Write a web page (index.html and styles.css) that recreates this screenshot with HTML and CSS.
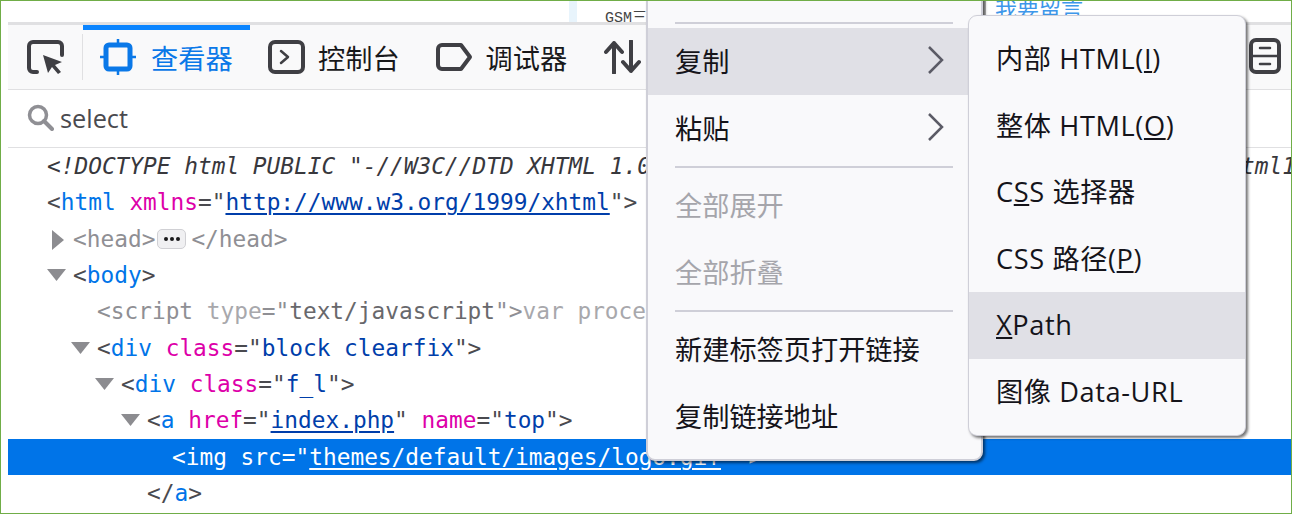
FILE: index.html
```html
<!DOCTYPE html>
<html lang="zh-CN">
<head>
<meta charset="utf-8">
<title>Inspector</title>
<link rel="stylesheet" href="styles.css">
</head>
<body>
<div class="frame">
  <div class="page-strip">
    <div class="strip-column"></div>
    <div class="strip-gsm">GSM三</div>
    <div class="strip-bar"></div>
    <a class="strip-link">我要留言</a>
  </div>
  <div class="devtools">
    <div class="toolbar">
      <div class="tool-pick">
        <svg class="icon" width="37" height="34" viewBox="0 0 37 34"><path d="M10 32H6a4 4 0 0 1-4-4V6a4 4 0 0 1 4-4h25a4 4 0 0 1 4 4v9" class="stroke"/><path d="M16 15l19 7-7 3 6 7-3 2-6-7-4 6z" class="fill"/></svg>
      </div>
      <div class="tool-sep"></div>
      <div class="tab tab-active">
        <svg width="36" height="36" viewBox="0 0 36 36"><rect x="6" y="6" width="24" height="24" rx="3" class="stroke-blue"/><path d="M18 0v6M18 30v6M0 18h6M30 18h6" class="tick-blue"/></svg>
        <span>查看器</span>
      </div>
      <div class="tab">
        <svg width="37" height="34" viewBox="0 0 37 34"><rect x="2" y="2" width="33" height="30" rx="5" class="stroke"/><path d="M13 11l7 6-7 6" class="stroke-thin"/></svg>
        <span>控制台</span>
      </div>
      <div class="tab">
        <svg width="37" height="30" viewBox="0 0 37 30"><path d="M6 3h19l9 12-9 12H6a4 4 0 0 1-4-4V7a4 4 0 0 1 4-4z" class="stroke"/></svg>
        <span>调试器</span>
      </div>
      <div class="tab tab-net">
        <svg width="37" height="34" viewBox="0 0 37 34"><path d="M10 33V3M2 12l8-9 8 9M27 1v30M19 22l8 9 8-9" class="stroke"/></svg>
      </div>
      <svg class="tool-end" width="32" height="36" viewBox="0 0 32 36"><rect x="2" y="2" width="28" height="32" rx="5" class="stroke"/><path d="M2 18h28" class="stroke-thin"/><path d="M11 10h10M11 26h10" class="stroke-thin"/></svg>
    </div>
    <div class="search">
      <svg width="27" height="27" viewBox="0 0 27 27"><circle cx="11" cy="11" r="8.5" class="search-ring"/><path d="M17 17l8 8" class="search-handle"/></svg>
      <span>select</span>
    </div>
    <div class="tree">
      <div class="row lv0 doctype">&lt;!DOCTYPE html PUBLIC "-//W3C//DTD XHTML 1.0 Transitional//EN" "http://www.w3.org/TR/xhtml1/DTD/xhtml1-transitional.dtd"&gt;</div>
      <div class="row lv0"><span class="p">&lt;</span><span class="t">html</span> <span class="a">xmlns</span><span class="p">=</span><span class="p">"</span><span class="v link">http://www.w3.org/1999/xhtml</span><span class="p">"&gt;</span></div>
      <div class="row lv1 dim"><svg class="twisty" width="13" height="20" viewBox="0 0 13 20"><path d="M1 0l12 10L1 20z"/></svg><span class="p">&lt;</span><span class="t">head</span><span class="p">&gt;</span><span class="badge"><i></i><i></i><i></i></span><span class="p">&lt;/</span><span class="t">head</span><span class="p">&gt;</span></div>
      <div class="row lv1"><svg class="twisty" width="19" height="12" viewBox="0 0 19 12"><path d="M0 0h19L9.500 12z"/></svg><span class="p">&lt;</span><span class="t">body</span><span class="p">&gt;</span></div>
      <div class="row lv2 dim"><span class="p">&lt;</span><span class="t">script</span> <span class="a">type</span><span class="p">="</span><span class="v">text/javascript</span><span class="p">"&gt;</span><span class="faint">var process = process</span></div>
      <div class="row lv2"><svg class="twisty" width="19" height="12" viewBox="0 0 19 12"><path d="M0 0h19L9.500 12z"/></svg><span class="p">&lt;</span><span class="t">div</span> <span class="a">class</span><span class="p">="</span><span class="v">block clearfix</span><span class="p">"&gt;</span></div>
      <div class="row lv3"><svg class="twisty" width="19" height="12" viewBox="0 0 19 12"><path d="M0 0h19L9.500 12z"/></svg><span class="p">&lt;</span><span class="t">div</span> <span class="a">class</span><span class="p">="</span><span class="v">f_l</span><span class="p">"&gt;</span></div>
      <div class="row lv4"><svg class="twisty" width="19" height="12" viewBox="0 0 19 12"><path d="M0 0h19L9.500 12z"/></svg><span class="p">&lt;</span><span class="t">a</span> <span class="a">href</span><span class="p">="</span><span class="v link">index.php</span><span class="p">"</span> <span class="a">name</span><span class="p">="</span><span class="v">top</span><span class="p">"&gt;</span></div>
      <div class="row lv5 selected">&lt;img src="<span class="link">themes/default/images/logo.gif</span>" &gt;</div>
      <div class="row lv4"><span class="p">&lt;/</span><span class="t">a</span><span class="p">&gt;</span></div>
    </div>
  </div>

  <div class="menu menu-main">
    <div class="menu-sep"></div>
    <div class="item active"><span>复制</span><svg width="16" height="28" viewBox="0 0 16 28"><path d="M1 1l13 13L1 27" class="chev"/></svg></div>
    <div class="item"><span>粘贴</span><svg width="16" height="28" viewBox="0 0 16 28"><path d="M1 1l13 13L1 27" class="chev"/></svg></div>
    <div class="menu-sep"></div>
    <div class="item disabled">全部展开</div>
    <div class="item disabled">全部折叠</div>
    <div class="menu-sep"></div>
    <div class="item">新建标签页打开链接</div>
    <div class="item">复制链接地址</div>
  </div>

  <div class="menu menu-sub">
    <div class="item">内部 HTML(<u>I</u>)</div>
    <div class="item">整体 HTML(<u>O</u>)</div>
    <div class="item">C<u>S</u>S 选择器</div>
    <div class="item">CSS 路径(<u>P</u>)</div>
    <div class="item active"><span><u>X</u>Path</span></div>
    <div class="item">图像 Data-URL</div>
  </div>
</div>
</body>
</html>
```
FILE: styles.css
```css
* { box-sizing: border-box; }
html, body { margin: 0; padding: 0; background: #fff; }
.frame {
  position: relative;
  width: 1292px;
  height: 514px;
  border: 1px solid #70ad47;
  overflow: hidden;
  display: flex;
  flex-direction: column;
  font-family: "Open Sans", "Noto Sans CJK SC", sans-serif;
}
.page-strip {
  position: relative;
  height: 21px;
  flex: none;
  background: #fff;
  overflow: hidden;
}
.strip-column { position: absolute; left: 568px; top: 0; width: 8px; height: 21px; background: #e8f4fc; }
.strip-gsm { position: absolute; left: 604px; top: 8px; font: 15px/20px "Liberation Mono", "Noto Sans CJK SC", monospace; color: #444; white-space: nowrap; }
.strip-bar { position: absolute; left: 982px; top: 0; width: 3px; height: 21px; background: #b8b8b8; }
.strip-link { position: absolute; left: 994px; top: -9px; font: 22px/30px "Noto Sans CJK SC", sans-serif; color: #3d97ea; text-decoration: underline; white-space: nowrap; }

.devtools { flex: 1; min-height: 0; margin-left: 7px; display: flex; flex-direction: column; }
.toolbar {
  flex: none;
  height: 68px;
  display: flex;
  align-items: center;
  position: relative;
  background: #f9f9fa;
  border-top: 3px solid #e0e0e2;
  border-bottom: 1px solid #e0e0e2;
  font-family: "Noto Sans CJK SC", sans-serif;
  font-size: 27.200px;
  color: #18181a;
}
.tool-pick { width: 74px; padding-left: 19px; display: flex; align-items: center; }
.tool-sep { width: 1px; height: 46px; background: #e0e0e2; }
.tab { height: 64px; display: flex; align-items: center; gap: 13px; padding: 0 18px; white-space: nowrap; }
.tab span { line-height: 32px; }
.tab-active {
  width: 167px;
  color: #0a78e8;
  border-top: 5px solid #0a84ff;
  padding: 0 0 5px 17px;
  gap: 15px;
}
.tab-net { padding-left: 19px; }
.tool-end { position: absolute; left: 1241px; top: 13px; }
.stroke { fill: none; stroke: #3f3f44; stroke-width: 4; stroke-linecap: round; stroke-linejoin: round; }
.stroke-thin { fill: none; stroke: #3f3f44; stroke-width: 2.500; stroke-linecap: round; stroke-linejoin: round; }
.fill { fill: #3f3f44; }
.stroke-blue { fill: none; stroke: #0a78e8; stroke-width: 5; }
.tick-blue { fill: none; stroke: #0a78e8; stroke-width: 2.500; }

.search {
  flex: none;
  height: 58px;
  display: flex;
  align-items: center;
  gap: 6px;
  padding: 0 0 2px 19px;
  border-bottom: 1px solid #e0e0e2;
  font-size: 25.300px;
  color: #4a4a4f;
}
.search-ring { fill: none; stroke: #8f8f94; stroke-width: 3.500; }
.search-handle { fill: none; stroke: #8f8f94; stroke-width: 4; stroke-linecap: round; }

.tree {
  flex: 1;
  min-height: 0;
  overflow: hidden;
  font-family: "DejaVu Sans Mono", monospace;
  font-size: 22.800px;
  color: #4a4a4f;
}
.row { position: relative; height: 36.330px; line-height: 36px; white-space: nowrap; }
.lv0 { padding-left: 39px; }
.lv1 { padding-left: 65px; }
.lv2 { padding-left: 89px; }
.lv3 { padding-left: 113px; }
.lv4 { padding-left: 139px; }
.lv5 { padding-left: 164px; }
.doctype { font-style: italic; color: #38383d; }
.p { color: #4a4a4f; }
.t { color: #0074e8; }
.a { color: #dd00a9; }
.v { color: #003eaa; }
.dim .p, .dim .t { color: #8f8f94; }
.dim .a { color: #a8a8ac; }
.dim .v { color: #68686c; }
.link { text-decoration: underline; text-decoration-thickness: 2px; text-underline-offset: 3px; }
.faint { color: #a8a8ac; }
.selected { background: #0074e8; color: #fff; }
.twisty { position: absolute; fill: #8c8c90; }
.row > .twisty { top: 12px; margin-left: -26px; }
.lv1.dim > .twisty { top: 9px; margin-left: -22px; }
.badge {
  display: inline-flex;
  align-items: center;
  justify-content: center;
  gap: 2px;
  width: 29px;
  height: 20px;
  margin: 0 5px 3px 2px;
  vertical-align: middle;
  background: #f0f0f2;
  border: 1px solid #d0d0d4;
  border-radius: 5px;
}
.badge i { width: 4px; height: 4px; border-radius: 50%; background: #18181a; }

.menu {
  position: absolute;
  background: #f9f9fb;
  border: 1px solid #cfcfd8;
  border-radius: 9px;
  color: #15141a;
  font-size: 27.200px;
  box-shadow: 2px 2px 3px rgba(0, 0, 0, .55);
}
.menu-main { left: 645px; top: -24px; width: 337px; height: 484px; padding-top: 39px; border-width: 2px; }
.menu-sub { left: 967px; top: 14px; width: 278px; height: 421px; padding-top: 10px; }
.item {
  height: 67px;
  display: flex;
  align-items: center;
  justify-content: space-between;
  white-space: pre;
  padding: 0 37px 3px 27px;
}
.menu-sub .item { height: 66.500px; padding: 0 20px 0 27px; display: block; line-height: 66px; letter-spacing: .6px; }
.active { background: #e0e0e6; }
.disabled { color: #a5a5ab; }
.menu-sep { height: 2px; margin: 4px 28px 4px 27px; background: #cfcfd8; }
.chev { fill: none; stroke: #5b5b66; stroke-width: 2.500; }
u { text-underline-offset: 2px; }
```
